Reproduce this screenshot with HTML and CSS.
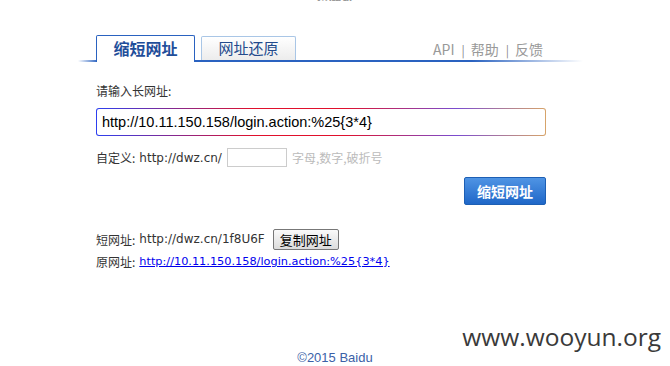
FILE: index.html
```html
<!DOCTYPE html>
<html lang="zh-CN">
<head>
    <meta charset="UTF-8">
    <title>短网址</title>
    <link rel="stylesheet" href="styles.css">
</head>
<body>
    <div class="top">短网址</div>

    <div class="wrap">
        <div class="tabbar">
            <a class="tab active">缩短网址</a>
            <a class="tab">网址还原</a>
            <div class="links">API<span class="sep">|</span>帮助<span class="sep">|</span>反馈</div>
        </div>

        <div class="form">
            <div class="label">请输入长网址:</div>
            <div class="longurl">
                <input type="text" value="http://10.11.150.158/login.action:%25{3*4}">
            </div>
            <div class="custom">
                自定义: <span class="pre">http://dwz.cn/</span>
                <input type="text" class="alias">
                <span class="hint">字母,数字,破折号</span>
            </div>
            <div class="actions">
                <button class="submit">缩短网址</button>
            </div>

            <div class="result">
                <div class="row">短网址: <span class="pre">http://dwz.cn/1f8U6F</span> <button class="copy">复制网址</button></div>
                <div class="row">原网址: <a href="#" class="orig">http://10.11.150.158/login.action:%25{3*4}</a></div>
            </div>
        </div>
    </div>

    <div class="mark">www.wooyun.org</div>
    <div class="foot">©2015 Baidu</div>
</body>
</html>
```

FILE: styles.css
```css
body { margin: 0; font-family: "Noto Sans CJK SC", sans-serif; font-size: 12px; color: #333; background: #fff; }
.top { text-align: center; font-size: 13px; font-weight: bold; color: #999; height: 6px; line-height: 6px; margin-top: -5px; overflow: hidden; }

.wrap { width: 505px; margin: 34px 0 0 78px; }
.tabbar { display: flex; align-items: flex-end; height: 27px; padding-left: 18px; background: linear-gradient(to right, rgba(42,98,192,0), #2a62c0 20px, #2a62c0 78%, rgba(42,98,192,0)) no-repeat left bottom / 100% 2px; }
.tab { display: block; box-sizing: border-box; text-align: center; font-size: 15px; border: 1px solid #a9c6e6; border-bottom: none; border-radius: 2px 2px 0 0; }
.tab.active { width: 99px; height: 27px; line-height: 24px; font-weight: bold; color: #1f4e9a; background: #fff; border-color: #2a62c0; font-size: 16px; }
.tab:not(.active) { width: 95px; height: 24px; line-height: 22px; margin-left: 6px; margin-bottom: 2px; color: #234a8c; background: linear-gradient(#fff, #ececec); }
.links { margin-left: auto; margin-right: 40px; margin-bottom: 3px; font-size: 14px; color: #999; }
.links .sep { font-size: 12px; color: #888; margin: 0 6px 0 7px; }

.form { padding-left: 18px; width: 450px; }
.label { margin-top: 21px; font-size: 12px; line-height: 16px; }
.longurl { margin-top: 9px; padding: 1px; border-radius: 3px; background: linear-gradient(to right, #2c3ff0, #e0102c 35%, #e0102c 55%, #7a4cd0 80%, #d7a46a); }
.longurl input { display: block; box-sizing: border-box; width: 100%; height: 26px; border: none; border-radius: 2px; padding: 0 5px; font-family: "Liberation Sans", sans-serif; font-size: 14.5px; color: #000; outline: none; }
.custom { margin-top: 12px; display: flex; align-items: center; font-size: 12px; }
.custom .pre { margin-left: 4px; }
.pre { font-family: "DejaVu Sans", sans-serif; font-size: 12px; color: #333; }
.alias { width: 60px; height: 19px; box-sizing: border-box; border: 1px solid #ccc; margin: 0 5px 0 5px; }
.hint { color: #bbb; }
.actions { display: flex; justify-content: flex-end; margin-top: 10px; }
.submit { width: 82px; height: 28px; border: 1px solid #1d5fb4; border-radius: 2px; background: linear-gradient(#4f94e4, #1f67c8); color: #fff; font-family: inherit; font-size: 14px; font-weight: bold; }

.result { margin-top: 23px; }
.row { display: flex; align-items: center; height: 22px; }
.row .pre { margin-left: 4px; }
.copy { margin-left: 8px; height: 21px; padding: 0 6px; border: 1px solid #777; border-radius: 2px; background: linear-gradient(#fafafa, #dcdcdc); font-family: inherit; font-size: 13px; color: #000; }
.orig { margin-left: 4px; font-family: "DejaVu Sans", sans-serif; font-size: 11.3px; color: #00e; }

.mark { text-align: right; margin: 50px 9px 0 0; font-family: "Open Sans", sans-serif; font-size: 24.5px; color: #3a3a3a; line-height: 30px; }
.foot { text-align: center; font-family: "Liberation Sans", sans-serif; font-size: 13px; color: #3b61a8; margin-top: -2px; }
```
